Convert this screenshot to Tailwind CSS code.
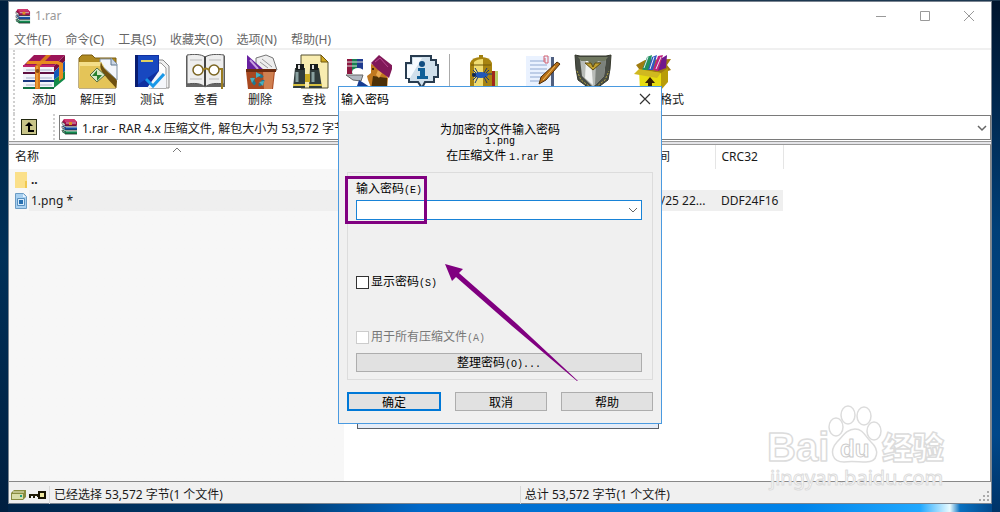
<!DOCTYPE html>
<html lang="zh-CN">
<head>
  <meta charset="UTF-8">
  <meta name="viewport" content="width=device-width, initial-scale=1">
  <title>1.rar</title>
  <script src="https://cdn.jsdelivr.net/npm/@tailwindcss/browser@4"></script>
</head>
<body class="h-screen overflow-hidden px-2 pt-px pb-2 font-['Noto_Sans','Noto_Sans_CJK_SC',sans-serif] text-[12px] text-[#1a1a1a] [background:linear-gradient(#1c3850,#1c3850)_top/100%_1px_no-repeat,linear-gradient(#00203f,#003058_50%,#001f40)_left/8px_100%_no-repeat,linear-gradient(#00152d,#003f78_45%,#00478a_85%,#003468)_right/8px_100%_no-repeat,linear-gradient(90deg,#002448,#004078_30%,#0068c8_42%,#0084ea_80%,#20a8ff_92%,#e8fbff_95%,#0870c0_96%,#004080)]">

  <!-- Shared icon -->
  <svg class="hidden">
    <symbol id="rar" viewBox="0 0 17 17">
      <path d="M1 4l2-3h10l3 3v3l-1 1H4z" fill="#a0104c"/>
      <path d="M2 7l2 2h12v3H4L1 10z" fill="#1450a8"/>
      <path d="M2 11l2 2h12v3H4l-3-2z" fill="#128a50"/>
      <path d="M1 4l3 2v2L1 6zM1 8l3 2v1L1 10zM1 12l3 2v1l-3-2z" fill="#fff" stroke="#333" stroke-width=".6"/>
      <path d="M3 1h10l3 3H4z" fill="#d03870"/>
      <path d="M5 5h10M5 9h11M5 13h11" stroke="#e8e8e8" stroke-width=".8"/>
      <path d="M4 8h12M4 12h12M4 16h12" stroke="#222" stroke-width=".8"/>
      <path d="M8 4h3v3H8z" fill="#e09020"/>
    </symbol>
  </svg>

  <!-- Main window -->
  <main class="relative flex h-full flex-col border border-[#7a8490] bg-white">
    <header class="flex h-7 shrink-0 items-center pl-1.5">
      <svg class="size-4"><use href="#rar"/></svg>
      <h1 class="ml-1 flex-1 text-[12px] text-[#999]">1.rar</h1>
      <button aria-label="最小化" class="flex w-11 justify-center"><svg class="size-3" fill="none" stroke="#999"><path d="M1 6.5h10"/></svg></button>
      <button aria-label="最大化" class="flex w-11 justify-center"><svg class="size-3" fill="none" stroke="#999"><path d="M1.500 1.500h9v9h-9z"/></svg></button>
      <button aria-label="关闭" class="flex w-11 justify-center"><svg class="size-3" fill="none" stroke="#999"><path d="M1 1l10 10M11 1L1 11"/></svg></button>
    </header>

    <nav class="flex h-5 shrink-0 items-center gap-3.5 border-b-2 border-[#f0f0f0] pt-0.5 pl-[5px] text-[#666]">
      <a href="#">文件(F)</a>
      <a href="#">命令(C)</a>
      <a href="#">工具(S)</a>
      <a href="#">收藏夹(O)</a>
      <a href="#">选项(N)</a>
      <a href="#">帮助(H)</a>
    </nav>

    <!-- Toolbar -->
    <div class="ml-1 flex h-16 shrink-0 border-l-2 border-dotted border-[#d0d0d0] pt-1 pl-0.5">
      <button class="flex w-[54px] flex-col items-center">
        <svg class="h-9 w-11" viewBox="0 0 44 36">
          <path d="M1 12L12 1h31L32 12z" fill="#9c1458"/>
          <path d="M32 12L43 1v6L32 18z" fill="#7a0c40"/>
          <path d="M32 18L43 7v10L32 26z" fill="#1458b8"/>
          <path d="M32 26l11-9v8l-11 9z" fill="#128a48"/>
          <path d="M1 12h31v6H1zM1 20h31v6H1zM1 28h31v6H1z" fill="#f2f4fa"/>
          <path d="M1 11h31v2H1z" fill="#c02468"/>
          <path d="M1 18h31v2H1z" fill="#601040"/>
          <path d="M1 26h31v2H1z" fill="#183880"/>
          <path d="M1 33h31v2H1z" fill="#107040"/>
          <path d="M4 16h26M4 24h26M4 31h26" stroke="#a8b0c8"/>
          <path d="M13 12L24 1h5L18 12v23h-5z" fill="#d8781c"/>
          <path d="M6 7h30l5 2v15l-4 3V11l-3-1H4z" fill="#e88a20"/>
          <path d="M15 12v22" stroke="#ffc050"/>
          <circle cx="15.500" cy="17" r="2" fill="#8a4a10"/>
        </svg>
        <span class="mt-0.5 leading-4">添加</span>
      </button>
      <button class="flex w-[54px] flex-col items-center">
        <svg class="h-9 w-11" viewBox="0 0 44 36">
          <path d="M3 4l3-3h10l3 3h21v30H3z" fill="#b08a20" stroke="#7a5c10"/>
          <path d="M24 5h12l5 5v16L24 10z" fill="#f4f6fa" stroke="#8090a0"/>
          <path d="M35 4v7h6" fill="#c8d4e4" stroke="#607890"/>
          <path d="M3 8h22l15 26H3z" fill="#e4c458"/>
          <path d="M3 8h22l3 4H4v20z" fill="#f4de88"/>
          <path d="M25 8c-3 9 5 14 15 26l1-7C36 20 28 18 25 8z" fill="#6e5010"/>
          <path d="M21 14l8 7-8 7-7-7z" fill="#d8e8c8" stroke="#5a7040"/>
          <path d="M21 16v5h5l-5 6v-5h-5z" fill="#288030"/>
        </svg>
        <span class="mt-0.5 leading-4">解压到</span>
      </button>
      <button class="flex w-[54px] flex-col items-center">
        <svg class="h-9 w-11" viewBox="0 0 44 36">
          <path d="M21 6h12l6 6v22H21z" fill="#f0f0f0" stroke="#888"/>
          <path d="M19 9h12l5 5v20H19z" fill="#fff" stroke="#999"/>
          <path d="M5 1h24v32H5z" fill="#1030a0"/>
          <path d="M7 2h21v15L7 31z" fill="#1848c0"/>
          <path d="M5 1h3v32H5z" fill="#081c70"/>
          <path d="M11 7h12" stroke="#e0d060" stroke-width="2"/>
          <path d="M29 17l7 4v13H17z" fill="#f4f6fa"/>
          <path d="M16 25l7 7 11-12" fill="none" stroke="#1898e8" stroke-width="3"/>
        </svg>
        <span class="mt-0.5 leading-4">测试</span>
      </button>
      <button class="flex w-[54px] flex-col items-center">
        <svg class="h-9 w-11" viewBox="0 0 44 36">
          <path d="M2 2h39v31H2z" fill="#666"/>
          <path d="M3 1c7-1 14-1 18 2 5-3 12-3 19-2v29c-7-1-14-1-19 3-4-4-11-4-18-3z" fill="#eee" stroke="#555"/>
          <path d="M21 3v29" stroke="#444" stroke-width="2"/>
          <path d="M6 6h12M6 25h12M25 6h12M25 25h10" stroke="#bbb"/>
          <circle cx="14" cy="16" r="5" fill="#fff" stroke="#7a6420" stroke-width="1.500"/>
          <circle cx="30" cy="16" r="5" fill="#fff" stroke="#7a6420" stroke-width="1.500"/>
          <path d="M19 16q3-3 6 0M35 15h3v20" fill="none" stroke="#9a7c20" stroke-width="2"/>
        </svg>
        <span class="mt-0.5 leading-4">查看</span>
      </button>
      <button class="flex w-[54px] flex-col items-center">
        <svg class="h-9 w-11" viewBox="0 0 44 36">
          <path d="M18 4l10-3 7 3 4 12H18z" fill="#eee" stroke="#777"/>
          <path d="M24 5l10 8M22 8l8 6" stroke="#999"/>
          <path d="M9 1v15h17z" fill="#6820a0"/>
          <path d="M12 6l8 9" stroke="#c8a0e0" stroke-width="2"/>
          <path d="M8 17h29l-2 18H10z" fill="#a84820"/>
          <path d="M25 17h11l-2 18h-8z" fill="#d08050"/>
          <path d="M8 15h30v3H8z" fill="#6c2c10"/>
          <circle cx="20" cy="26" r="5" fill="none" stroke="#207890" stroke-width="3" stroke-dasharray="7 3.500"/>
          <path d="M18 18l5 3-5 3zM26 27l-5 1 4 4zM12 24h5l-3 5z" fill="#48b0c0"/>
        </svg>
        <span class="mt-0.5 leading-4">删除</span>
      </button>
      <button class="flex w-[54px] flex-col items-center">
        <svg class="mr-2 h-9 w-11" viewBox="0 0 44 36">
          <path d="M13 1h20l7 7v26H13z" fill="#f8ecb0" stroke="#555030"/>
          <path d="M33 1v7h7z" fill="#d0a820" stroke="#705810"/>
          <path d="M7 14h10v20H5zM22 14h9l3 20H21z" fill="#303c3c"/>
          <path d="M8 10h8v6H8zM22 10h8v6h-8z" fill="#181c1c"/>
          <path d="M11 11v4M25 11v4" stroke="#ddd" stroke-width="2"/>
          <path d="M9 18v10M25 18v10" stroke="#88a0a0" stroke-width="3"/>
          <path d="M17 20h5v8h-5z" fill="#c8a820"/>
          <path d="M5 31h12M21 31h13" stroke="#d8c040" stroke-width="2"/>
        </svg>
        <span class="mt-0.5 leading-4">查找</span>
      </button>
      <button class="flex w-[54px] flex-col items-center">
        <svg class="h-9 w-12" viewBox="0 0 48 36">
          <path d="M3 5h5v15H3z" fill="#8c1840"/>
          <path d="M8 5h5v15H8z" fill="#188050"/>
          <path d="M13 5h6v15h-6z" fill="#203c90"/>
          <path d="M3 8h16M3 12h10" stroke="#ddd"/>
          <ellipse cx="14" cy="18" rx="6" ry="4" fill="#fff"/>
          <path d="M2 21h17l-2 6-8-1z" fill="#b0b8c0" stroke="#666"/>
          <path d="M12 35l3-9 14 9z" fill="#183c90"/>
          <path d="M27 10l9 3 8 11-1 12H28l-4-10-1-4 4-3z" fill="#c07820"/>
          <path d="M29 22l14 2v12H27z" fill="#4c3008"/>
          <path d="M34 16l4 3-3 5-3-3z" fill="#e8a850"/>
          <path d="M27 9l8-8 14 11-4 12-11-8z" fill="#801858"/>
          <path d="M31 8l5-4 8 9" fill="none" stroke="#b84890"/>
          <circle cx="29" cy="15" r="1" fill="#201000"/>
        </svg>
        <span class="mt-0.5 leading-4">向导</span>
      </button>
      <button class="flex w-[54px] flex-col items-center">
        <svg class="h-9 w-11" viewBox="0 0 44 36">
          <path d="M11 2h20v4h5v5h2v12h-4v5h-9l-3 6-4-6H9v-4H6V9h5z" fill="#d0e0ec" stroke="#283c50" stroke-width="2"/>
          <path d="M13 4h9L10 24H7V11h6z" fill="#f6fbff"/>
          <circle cx="22" cy="10" r="3" fill="#104c80"/>
          <path d="M18 14h7v8h3v3H17v-3h3v-5h-2z" fill="#106098"/>
        </svg>
        <span class="mt-0.5 leading-4">信息</span>
      </button>
      <div class="h-full w-2 border-l border-[#aaa]"></div>
      <button class="flex w-[54px] flex-col items-center">
        <svg class="h-9 w-11" viewBox="0 0 44 36">
          <path d="M30 17h6v18h-6z" fill="#a02818"/>
          <path d="M33 17h3v18h-3z" fill="#b8d068"/>
          <path d="M17 1h4v4h-4z" fill="#a08010"/>
          <path d="M8 9q2-6 11-6t11 6v26H8z" fill="#a88410"/>
          <path d="M12 8q3-3 9-3v30h-9z" fill="#f0dc70"/>
          <path d="M9 11h20" stroke="#705808"/>
          <ellipse cx="19" cy="21" rx="7" ry="3" fill="#2058b8"/>
          <path d="M13 14l3 5M25 14l-3 5M10 20h4M25 20h5M13 29l3-6M25 29l-3-6M11 16l3 3M11 26l4-4M27 16l-3 3M27 26l-4-4" stroke="#183878"/>
          <circle cx="12" cy="21" r="2" fill="#102850"/>
        </svg>
        <span class="mt-0.5 leading-4">扫描病毒</span>
      </button>
      <button class="flex w-[62px] flex-col items-center">
        <svg class="h-9 w-11" viewBox="0 0 44 36">
          <path d="M31 3h3v33h-3z" fill="#506080"/>
          <path d="M6 2h25v34H6z" fill="#eaf2ff"/>
          <path d="M10 7h14M10 11h17M10 15h17M10 19h17M10 23h14M10 27h9" stroke="#90a8d0"/>
          <path d="M24 8V2h4v7h-3V4" fill="none" stroke="#d06070"/>
          <path d="M37 8l3 2-14 16-7 4 2-7z" fill="#b87018" stroke="#4c2c08"/>
          <path d="M35 12l-12 14" stroke="#f0c060"/>
        </svg>
        <span class="mt-0.5 leading-4">注释</span>
      </button>
      <button class="flex w-10 flex-col items-center">
        <svg class="h-9 w-10" viewBox="0 0 40 36">
          <path d="M2 1l5 1h26l5-1-1 14-2 11-15 11L5 26 3 15z" fill="#484c44" stroke="#35382c"/>
          <path d="M7 5l13-1 13 1-2 17-11 11L9 22z" fill="#b8bcb8"/>
          <path d="M13 6h5l2 25-8-7z" fill="#f0f2f0"/>
          <path d="M23 9l10-4-2 17-9 9z" fill="#7c827c"/>
          <path d="M5 3h30l-3 4h-7l-5 7-5-7H8z" fill="#707860"/>
          <path d="M12 9h6l2 4 2-4h6l-8 7z" fill="#c0a030" stroke="#604c10"/>
          <path d="M4 17l4 9 12 9 12-9 4-9" fill="none" stroke="#b8a840" stroke-dasharray="2 1.500"/>
        </svg>
        <span class="mt-0.5 leading-4">保护</span>
      </button>
      <button class="ml-[15px] flex w-16 flex-col items-center">
        <svg class="mr-3 h-9 w-11" viewBox="0 0 44 36">
          <path d="M4 11l9-5 26-1-4 6 4 5-9 3H10z" fill="#a07c10"/>
          <path d="M10 16L15 3l5-2-3 15z" fill="#209060"/>
          <path d="M16 16l4-13 5-2-4 15z" fill="#3058c0"/>
          <path d="M21 16l5-14 5-1-5 16z" fill="#c02080"/>
          <path d="M26 17l4-13 5-3-1 13z" fill="#70188c"/>
          <path d="M12 14l4-11M18 15l4-12M24 15l5-12" stroke="#e0e8f0"/>
          <path d="M7 16l22 3v17H8z" fill="#e8dc10"/>
          <path d="M29 19l7-5v14l-7 8z" fill="#b89c08"/>
          <path d="M2 20l5-5 22 4-4 5z" fill="#d0b820"/>
          <path d="M18 23l5 6h-3v7h-4v-7h-3z" fill="#382000"/>
        </svg>
        <span class="mt-0.5 leading-4 whitespace-nowrap">转换格式</span>
      </button>
    </div>

    <!-- Address bar -->
    <div class="flex h-7 shrink-0 border-b border-[#999] pb-px">
      <button aria-label="上一级" class="ml-1 flex h-full w-10 items-center border-l-2 border-dotted border-[#d0d0d0] pl-1.5">
        <svg class="size-4" viewBox="0 0 16 16">
          <path d="M0 0h16v16H0z" fill="#222810"/>
          <path d="M1 1h14v14H1z" fill="#c8c488"/>
          <path d="M8 3l4 4H9v4h4v2H7V7H4z" fill="#000"/>
        </svg>
      </button>
      <div class="relative h-full flex-1 border-l-2 border-dotted border-[#d0d0d0] pt-px pl-1">
        <svg class="absolute top-1 left-1.5 size-[17px]"><use href="#rar"/></svg>
        <select aria-label="地址" class="h-[25px] w-full appearance-none rounded-none border border-[#7a7a7a] bg-transparent pt-0.5 pl-[22px] text-[12px]">
          <option>1.rar - RAR 4.x 压缩文件, 解包大小为 53,572 字节</option>
        </select>
        <svg class="pointer-events-none absolute top-2.5 right-1 h-2 w-2.5" fill="none" stroke="#666" stroke-width="1.500"><path d="M1 2l4 4 4-4"/></svg>
      </div>
    </div>
    <div class="h-[3px] shrink-0 border-b border-[#999] bg-[#e4e4e8]"></div>

    <!-- File list -->
    <div class="relative min-h-0 flex-1 border-r border-[#888] bg-linear-to-r from-[#f7f7f7] from-[335px] to-white to-[335px]">
      <svg class="absolute top-0.5 left-[163px] h-1.5 w-2.5" fill="none" stroke="#777"><path d="M1 5l4-4 4 4"/></svg>
      <table class="w-full table-fixed border-collapse text-left">
        <colgroup>
          <col class="w-[335px]"><col class="w-[272px]"><col class="w-[99px]"><col class="w-[68px]"><col>
        </colgroup>
        <thead>
          <tr class="h-6 bg-white">
            <th class="pl-1.5 font-normal">名称</th>
            <th></th>
            <th class="border-r border-[#e5e5e5] pl-1.5 font-normal">修改时间</th>
            <th class="border-r border-[#e5e5e5] pl-1.5 font-normal">CRC32</th>
            <th></th>
          </tr>
        </thead>
        <tbody>
          <tr class="h-[21px]">
            <td class="pl-1.5" colspan="5">
              <div class="flex items-center gap-1">
                <svg class="h-4 w-3" viewBox="0 0 12 16"><path d="M0 0h12v16H0z" fill="#fbe08a"/><path d="M10 9h2v7h-2z" fill="#f0c850"/></svg>
                <span class="font-bold leading-4">..</span>
              </div>
            </td>
          </tr>
          <tr class="h-[21px]">
            <td class="bg-linear-to-r from-[#f7f7f7] from-[20px] to-[#efefef] to-[20px] pl-1.5">
              <div class="flex items-center gap-1">
                <svg class="h-4 w-3" viewBox="0 0 12 16"><path d="M.5.5h8l3 3v12H.5z" fill="#a8d0f0" stroke="#6c9cc4"/><path d="M8 1v3h3" fill="#e8f4ff"/><path d="M2.500 5.500h7v7h-7z" fill="#d8ecfc" stroke="#5890c0"/><path d="M4 7h4v4H4z" fill="#2870b0"/></svg>
                <span class="leading-4">1.png *</span>
              </div>
            </td>
            <td class="bg-[#efefef]"></td>
            <td class="bg-[#efefef] pl-1.5 whitespace-nowrap">2018/5/25 22...</td>
            <td class="bg-[#efefef] pl-1.5">DDF24F16</td>
            <td></td>
          </tr>
        </tbody>
      </table>
    </div>

    <!-- Status bar -->
    <footer class="flex h-[22px] shrink-0 items-center border-t border-[#888] bg-[#f0f0f0] pt-1 pl-0.5">
      <svg class="mr-0.5 h-3 w-9" viewBox="0 0 36 12">
        <path d="M0 4l3-3h12v7l-3 3H0z" fill="#888c40"/>
        <path d="M1 5h11v5H1z" fill="#d8dca8"/>
        <path d="M2 3h11" stroke="#f4f4d0"/>
        <path d="M9 7h2" stroke="#20a080" stroke-width="2"/>
        <path d="M18 5h10v3h-2V7h-2v2h-2V7h-2v2h-2z" fill="#201c08"/>
        <path d="M28 3h6v6h-6z" fill="#f0e8a0" stroke="#181400" stroke-width="2"/>
      </svg>
      <p class="flex-[40] border-l border-[#d8d8d8] pl-1">已经选择 53,572 字节(1 个文件)</p>
      <p class="flex-[39] border-l border-[#d8d8d8] pl-1">总计 53,572 字节(1 个文件)</p>
      <svg class="mt-1 size-3" fill="#aaa"><path d="M8 0h2v2H8zM8 4h2v2H8zM8 8h2v2H8zM4 4h2v2H4zM4 8h2v2H4zM0 8h2v2H0z"/></svg>
    </footer>
  </main>

  <!-- Window behind the dialog -->
  <div class="absolute top-[400px] left-[357px] h-[29px] w-[302px] border border-[#5c6068] bg-[#e4ecf8]"></div>

  <!-- Password dialog -->
  <section role="dialog" aria-labelledby="dialog-title" class="absolute top-[86px] left-[338px] flex h-[338px] w-[324px] flex-col border border-[#4a9ae0] bg-[#f0f0f0] font-['Noto_Sans_CJK_SC',sans-serif] text-black">
    <div class="flex h-6 shrink-0 items-center justify-between bg-white pr-2.5 pl-0.5">
      <h2 id="dialog-title">输入密码</h2>
      <button aria-label="关闭"><svg class="size-3" fill="none" stroke="#333" stroke-width="1.200"><path d="M1 1l10 10M11 1L1 11"/></svg></button>
    </div>
    <div class="pt-[11px] text-center leading-[13px]">
      <p>为加密的文件输入密码</p>
      <p class="font-['Liberation_Mono',monospace] text-[10px]">1.png</p>
      <p>在压缩文件 <span class="font-['Liberation_Mono',monospace] text-[10px]">1.rar</span> 里</p>
    </div>
    <form class="mx-2 mt-2 flex h-[208px] shrink-0 flex-col border border-[#dcdcdc] pt-1.5 pr-2.5 pl-2">
      <label for="password" class="leading-[18px]">输入密码<span class="font-['Liberation_Mono',monospace] text-[10px]">(E)</span></label>
      <div class="relative">
        <input id="password" type="text" class="block h-5 w-full border border-[#1883d7] bg-white px-1 outline-none">
        <svg class="absolute top-1.5 right-1 h-2 w-2.5" fill="none" stroke="#666"><path d="M1 2l4 4 4-4"/></svg>
      </div>
      <label class="mt-[53px] flex items-center gap-0.5 leading-4">
        <input type="checkbox" class="size-[13px] appearance-none border border-[#333] bg-white">
        <span>显示密码<span class="font-['Liberation_Mono',monospace] text-[10px]">(S)</span></span>
      </label>
      <label class="mt-9 flex items-center gap-0.5 leading-4 text-[#777]">
        <input type="checkbox" disabled class="size-[13px] appearance-none border border-[#ccc] bg-white">
        <span>用于所有压缩文件<span class="font-['Liberation_Mono',monospace] text-[10px]">(A)</span></span>
      </label>
      <button type="button" class="mt-1.5 h-[19px] border border-[#adadad] bg-[#e1e1e1] leading-4">整理密码<span class="font-['Liberation_Mono',monospace] text-[10px]">(O)...</span></button>
    </form>
    <div class="mt-3 flex gap-3.5 px-2">
      <button class="h-[19px] flex-1 border-2 border-[#0078d7] bg-[#e1e1e1] leading-[14px]">确定</button>
      <button class="h-[19px] flex-1 border border-[#adadad] bg-[#e1e1e1] leading-4">取消</button>
      <button class="h-[19px] flex-1 border border-[#adadad] bg-[#e1e1e1] leading-4">帮助</button>
    </div>
  </section>

  <!-- Annotations -->
  <div class="pointer-events-none absolute top-[176px] left-[345px] h-12 w-[82px] border-3 border-[#800080]"></div>
  <svg class="pointer-events-none absolute top-[260px] left-[440px] h-[126px] w-[142px]" fill="#800080"><path d="M5 4l18 5-4 4 58 51 61 57-1 0L72 66 16 17l-4 4z"/></svg>

  <!-- Watermark -->
  <svg class="pointer-events-none absolute top-[400px] left-[764px] h-[92px] w-[188px]" fill="#fff" stroke="#dcdcdc" stroke-width="1.500" stroke-linejoin="round">
    <g class="font-['Liberation_Sans',sans-serif] font-bold">
      <text x="3" y="61" font-size="40">Bai</text>
      <ellipse cx="72" cy="27" rx="7" ry="9"/>
      <ellipse cx="84" cy="15" rx="7" ry="9"/>
      <ellipse cx="100" cy="16" rx="7" ry="9"/>
      <ellipse cx="110" cy="31" rx="7" ry="9"/>
      <path d="M91 29c8 0 10 7 16 13 9 8 7 20-5 20-7 0-15-1-22 0-12 0-15-11-7-20 6-6 10-13 18-13z"/>
      <text x="76" y="57" font-size="24" stroke="#ccc" stroke-width="1">du</text>
    </g>
    <text x="118" y="59" font-size="31" font-weight="900" class="font-['Noto_Sans_CJK_SC',sans-serif]">经验</text>
    <text x="6" y="85" font-size="20" stroke-width="1" class="font-['Noto_Sans',sans-serif]">jingyan.baidu.com</text>
  </svg>
</body>
</html>
